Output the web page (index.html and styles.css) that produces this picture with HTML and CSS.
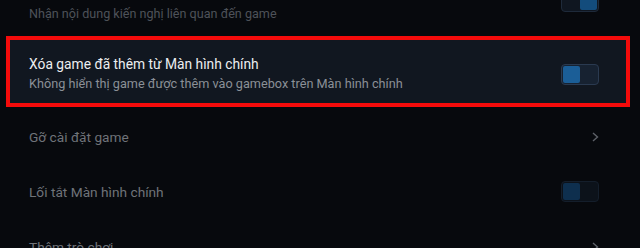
FILE: index.html
```html
<!DOCTYPE html>
<html lang="vi">
<head>
<meta charset="utf-8">
<link rel="stylesheet" href="styles.css">
</head>
<body>
<div class="list">
  <div class="card first">
    <div class="text">
      <div class="sub dim">Nhận nội dung kiến nghị liên quan đến game</div>
    </div>
    <span class="toggle on-right"><span class="knob"></span></span>
  </div>
  <div class="card selected">
    <div class="text">
      <div class="title">Xóa game đã thêm từ Màn hình chính</div>
      <div class="sub">Không hiển thị game được thêm vào gamebox trên Màn hình chính</div>
    </div>
    <span class="toggle"><span class="knob"></span></span>
  </div>
  <div class="row">
    <span class="label">Gỡ cài đặt game</span>
    <svg class="chev" width="7" height="10" viewBox="0 0 7 10"><path d="M1 1 L5.5 5 L1 9" fill="none" stroke="#5d6168" stroke-width="1.4"/></svg>
  </div>
  <div class="row">
    <span class="label">Lối tắt Màn hình chính</span>
    <span class="toggle dark"><span class="knob"></span></span>
  </div>
  <div class="row">
    <span class="label">Thêm trò chơi</span>
    <svg class="chev" width="7" height="10" viewBox="0 0 7 10"><path d="M1 1 L5.5 5 L1 9" fill="none" stroke="#5d6168" stroke-width="1.4"/></svg>
  </div>
</div>
</body>
</html>
```

FILE: styles.css
```css
html, body {
  margin: 0;
  padding: 0;
  background: #07090d;
  width: 640px;
  height: 248px;
  overflow: hidden;
  font-family: Roboto, "Noto Sans", "Liberation Sans", sans-serif;
}

.list {
  padding: 0 10px 0 6px;
  display: flex;
  flex-direction: column;
}

.card {
  height: 71px;
  box-sizing: border-box;
  border: 4px solid transparent;
  padding: 14px 27px 9px 19px;
  display: flex;
  align-items: center;
  justify-content: space-between;
}

.card.first {
  height: 36px;
  border-top: 0;
  border-bottom: 0;
  padding: 4px 27px 0 19px;
  align-items: flex-start;
}

.card.first .toggle {
  margin-top: -13px;
}

.card.selected {
  border-color: #f40b0b;
  background: #111720;
}

.text {
  display: flex;
  flex-direction: column;
}

.title {
  font-size: 13.8px;
  line-height: 20px;
  color: #eceef0;
}

.sub {
  font-size: 12.7px;
  line-height: 20px;
  color: #8b9097;
}

.sub.dim {
  color: #4e5259;
  font-size: 12.6px;
}

.toggle {
  width: 38px;
  height: 21px;
  box-sizing: border-box;
  border: 1px solid #2a3a50;
  border-radius: 4px;
  background: #172231;
  padding: 1px;
  display: flex;
}

.knob {
  width: 17px;
  height: 17px;
  border-radius: 2px;
  background: #1b5e97;
}

.toggle.on-right {
  justify-content: flex-end;
  background: #0f1620;
  border-color: #1e2a3a;
}

.toggle.on-right .knob {
  background: #134c7c;
}

.toggle.dark {
  background: #0c121a;
  border-color: #141e2b;
}

.toggle.dark .knob {
  background: #0e2f4e;
}

.row {
  height: 55px;
  padding: 0 31px 0 23px;
  display: flex;
  align-items: center;
  justify-content: space-between;
}

.row:nth-child(3) {
  margin-top: 2px;
}

.label {
  font-size: 13.7px;
  color: #6f7379;
}

.chev {
  margin-right: 0;
}
```
